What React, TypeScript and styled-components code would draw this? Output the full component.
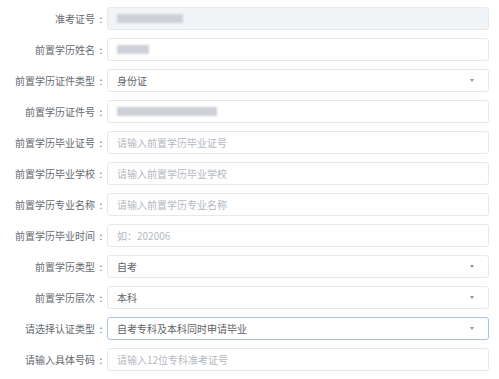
import styled, { createGlobalStyle } from 'styled-components'

const GlobalStyle = createGlobalStyle`
  body {
    margin: 0;
    background: #fff;
    font-family: "Noto Sans CJK SC", "Liberation Sans", sans-serif;
  }
`

const Form = styled.div`
  display: flex;
  flex-direction: column;
  gap: 8px;
  padding: 7px 10px 0 0;
  width: 499px;
  box-sizing: border-box;
`

const Row = styled.div`
  display: grid;
  grid-template-columns: 107px 1fr;
  align-items: center;
  height: 23px;
`

const Label = styled.label`
  display: flex;
  justify-content: flex-end;
  align-items: center;
  font-size: 10px;
  color: #666a70;
  white-space: nowrap;
`

const Colon = styled.span`
  width: 12px;
  text-align: center;
`

const Field = styled.div<{ $disabled?: boolean; $focused?: boolean }>`
  height: 23px;
  box-sizing: border-box;
  border: 1px solid ${p => (p.$focused ? '#a9c3e6' : '#e6e8ec')};
  border-radius: 3px;
  background: ${p => (p.$disabled ? '#f2f5f8' : '#fff')};
  display: flex;
  align-items: center;
  padding: 0 14px 0 9px;
  font-size: 10px;
  color: #606266;
`

const Text = styled.span<{ $placeholder?: boolean }>`
  flex: 1;
  display: flex;
  align-items: center;
  color: ${p => (p.$placeholder ? '#b4b8bf' : '#606266')};
`

const Masked = styled.span<{ $w: number }>`
  display: block;
  width: ${p => p.$w}px;
  height: 9px;
  background: #cdd1d7;
  filter: blur(1px);
`

const Caret = styled.span`
  width: 0;
  height: 0;
  border-left: 2.5px solid transparent;
  border-right: 2.5px solid transparent;
  border-top: 3px solid #8f939a;
`

type Item = {
  label: string
  value?: string
  placeholder?: string
  masked?: number
  select?: boolean
  disabled?: boolean
  focused?: boolean
}

const items: Item[] = [
  { label: '准考证号', masked: 66, disabled: true },
  { label: '前置学历姓名', masked: 32 },
  { label: '前置学历证件类型', value: '身份证', select: true },
  { label: '前置学历证件号', masked: 100 },
  { label: '前置学历毕业证号', placeholder: '请输入前置学历毕业证号' },
  { label: '前置学历毕业学校', placeholder: '请输入前置学历毕业学校' },
  { label: '前置学历专业名称', placeholder: '请输入前置学历专业名称' },
  { label: '前置学历毕业时间', placeholder: '如：202006' },
  { label: '前置学历类型', value: '自考', select: true },
  { label: '前置学历层次', value: '本科', select: true },
  { label: '请选择认证类型', value: '自考专科及本科同时申请毕业', select: true, focused: true },
  { label: '请输入具体号码', placeholder: '请输入12位专科准考证号' },
]

export default function App() {
  return (
    <>
      <GlobalStyle />
      <Form>
        {items.map(it => (
          <Row key={it.label}>
            <Label>
              {it.label}
              <Colon>:</Colon>
            </Label>
            <Field $disabled={it.disabled} $focused={it.focused}>
              {it.masked ? (
                <Text><Masked $w={it.masked} /></Text>
              ) : (
                <Text $placeholder={!it.value}>{it.value ?? it.placeholder}</Text>
              )}
              {it.select && <Caret />}
            </Field>
          </Row>
        ))}
      </Form>
    </>
  )
}
